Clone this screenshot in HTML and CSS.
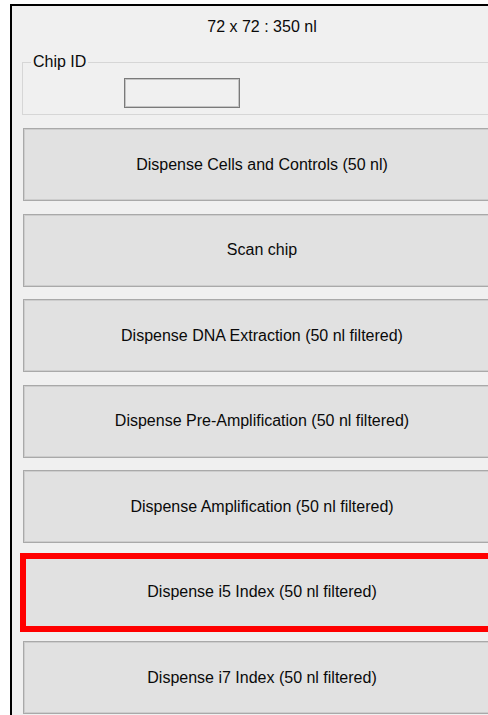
FILE: index.html
```html
<!DOCTYPE html>
<html lang="en">
<head>
<meta charset="utf-8">
<title>Chip dispense</title>
<link rel="stylesheet" href="styles.css">
</head>
<body>
  <div class="window">
    <div class="title">72 x 72 : 350 nl</div>
    <fieldset class="group">
      <legend class="group-label">Chip ID</legend>
      <div class="group-body">
        <input class="chip-input" type="text" aria-label="Chip ID">
      </div>
    </fieldset>
    <div class="actions">
      <button class="action" type="button">Dispense Cells and Controls (50 nl)</button>
      <button class="action" type="button">Scan chip</button>
      <button class="action" type="button">Dispense DNA Extraction (50 nl filtered)</button>
      <button class="action" type="button">Dispense Pre-Amplification (50 nl filtered)</button>
      <button class="action" type="button">Dispense Amplification (50 nl filtered)</button>
      <button class="action flagged" type="button">Dispense i5 Index (50 nl filtered)</button>
      <button class="action" type="button">Dispense i7 Index (50 nl filtered)</button>
    </div>
  </div>
</body>
</html>
```
FILE: styles.css
```css
html, body {
  margin: 0;
  padding: 0;
  background: #ffffff;
  overflow: hidden;
}

body {
  font-family: "Liberation Sans", Arial, sans-serif;
  font-size: 16px;
  color: #0a0a0a;
}

/* form window; its right part is cut off by the frame */
.window {
  margin: 4px 0 0 10px;
  width: calc(100% - 10px);
  height: 711px;
  box-sizing: border-box;
  padding-left: 10px;
  border-top: 2px solid #000000;
  border-left: 2px solid #000000;
  background: #f0f0f0;
  overflow: hidden;
}

.title {
  box-sizing: border-box;
  height: 47px;
  padding-top: 12px;
  line-height: 18px;
  width: 480px;
  text-align: center;
}

/* "Chip ID" group box */
.group {
  margin: 0;
  padding: 0;
  width: 490px;
  border: 1px solid #d6d6d6;
  box-sizing: border-box;
}

.group-label {
  margin-left: 8px;
  padding: 0 2px;
  line-height: 18px;
}

.group-body {
  padding: 7px 0 6px 101px;
}

.chip-input {
  display: block;
  box-sizing: border-box;
  width: 116px;
  height: 30px;
  margin: 0;
  border: 1px solid #7a7a7a;
  box-shadow: inset 0 0 0 1px #c4c4c4;
  background: #f0f0f0;
  font: inherit;
}

/* stacked command buttons */
.actions {
  display: flex;
  flex-direction: column;
  align-items: flex-start;
  gap: 12.5px;
  margin-top: 13px;
  margin-left: 1px;
}

.action {
  flex: none;
  box-sizing: border-box;
  width: 478px;
  height: 73px;
  margin: 0;
  padding: 0;
  border: 1px solid #a9a9a9;
  box-shadow: inset 0 0 0 1px #cdcdcd;
  background: #e1e1e1;
  font-family: "Liberation Sans", Arial, sans-serif;
  font-size: 16px;
  color: #0a0a0a;
  text-align: center;
}

.action.flagged {
  outline: 6px solid #ff0000;
  outline-offset: -3px;
}
```
